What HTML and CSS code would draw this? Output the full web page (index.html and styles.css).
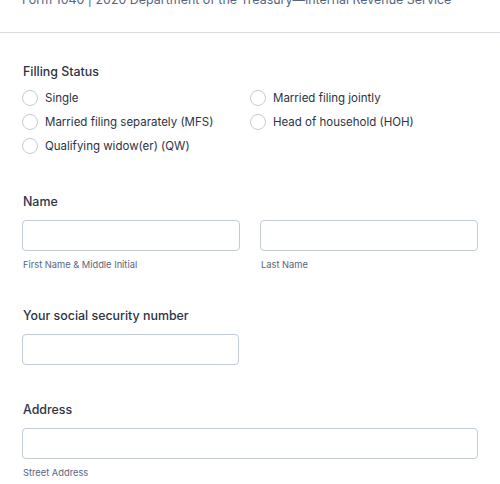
FILE: index.html
```html
<!DOCTYPE html>
<html>
<head>
<meta charset="utf-8">
<link rel="stylesheet" href="styles.css">
</head>
<body>
<div class="header">
  <p class="subtitle">Form 1040 | 2020 Department of the Treasury—Internal Revenue Service</p>
</div>
<div class="form">
  <div class="field status">
    <div class="label">Filling Status</div>
    <div class="radios">
      <div class="radio"><span class="circle"></span>Single</div>
      <div class="radio"><span class="circle"></span>Married filing jointly</div>
      <div class="radio"><span class="circle"></span>Married filing separately (MFS)</div>
      <div class="radio"><span class="circle"></span>Head of household (HOH)</div>
      <div class="radio"><span class="circle"></span>Qualifying widow(er) (QW)</div>
    </div>
  </div>
  <div class="field name">
    <div class="label">Name</div>
    <div class="pair">
      <div class="col"><div class="input"></div><div class="sub">First Name &amp; Middle Initial</div></div>
      <div class="col"><div class="input"></div><div class="sub">Last Name</div></div>
    </div>
  </div>
  <div class="field">
    <div class="label">Your social security number</div>
    <div class="input half"></div>
  </div>
  <div class="field">
    <div class="label">Address</div>
    <div class="input"></div>
    <div class="sub">Street Address</div>
  </div>
</div>
</body>
</html>
```
FILE: styles.css
```css
* { box-sizing: border-box; }
body {
  margin: 0;
  font-family: Inter, "Noto Sans", sans-serif;
  background: #fff;
  color: #2c3345;
  overflow: hidden;
}
.header {
  height: 33px;
  border-bottom: 1px solid #dcdee6;
  overflow: hidden;
}
.subtitle {
  margin: -10px 0 0 22px;
  font-size: 12.45px;
  line-height: 20px;
  color: #57647e;
  white-space: nowrap;
}
.form {
  padding: 30px 22px 0 22px;
}
.field {
  margin-bottom: 36px;
}
.field.status { margin-bottom: 38px; }
.label {
  font-size: 12.4px;
  font-weight: 500;
  line-height: 18px;
  margin-left: 1px;
  margin-bottom: 9px;
}
.field.status .label { margin-bottom: 8px; }
.radios {
  display: grid;
  grid-template-columns: 226px 1fr;
  row-gap: 6px;
}
.radio {
  display: flex;
  align-items: center;
  font-size: 11.5px;
  line-height: 18px;
  color: #2c3345;
}
.radio:nth-child(even) { margin-left: 2px; }
.circle {
  width: 16px;
  height: 16px;
  border: 1px solid #c3cad8;
  border-radius: 50%;
  margin-right: 7px;
  flex: none;
}
.pair {
  display: flex;
  gap: 20px;
}
.col { flex: 1; }
.input {
  height: 31px;
  border: 1px solid #c3cad8;
  border-radius: 4px;
  background: #fff;
}
.input.half { width: 217px; }
.sub {
  font-size: 9.3px;
  line-height: 12px;
  color: #57647e;
  margin-top: 8px;
  margin-left: 1px;
}
```
